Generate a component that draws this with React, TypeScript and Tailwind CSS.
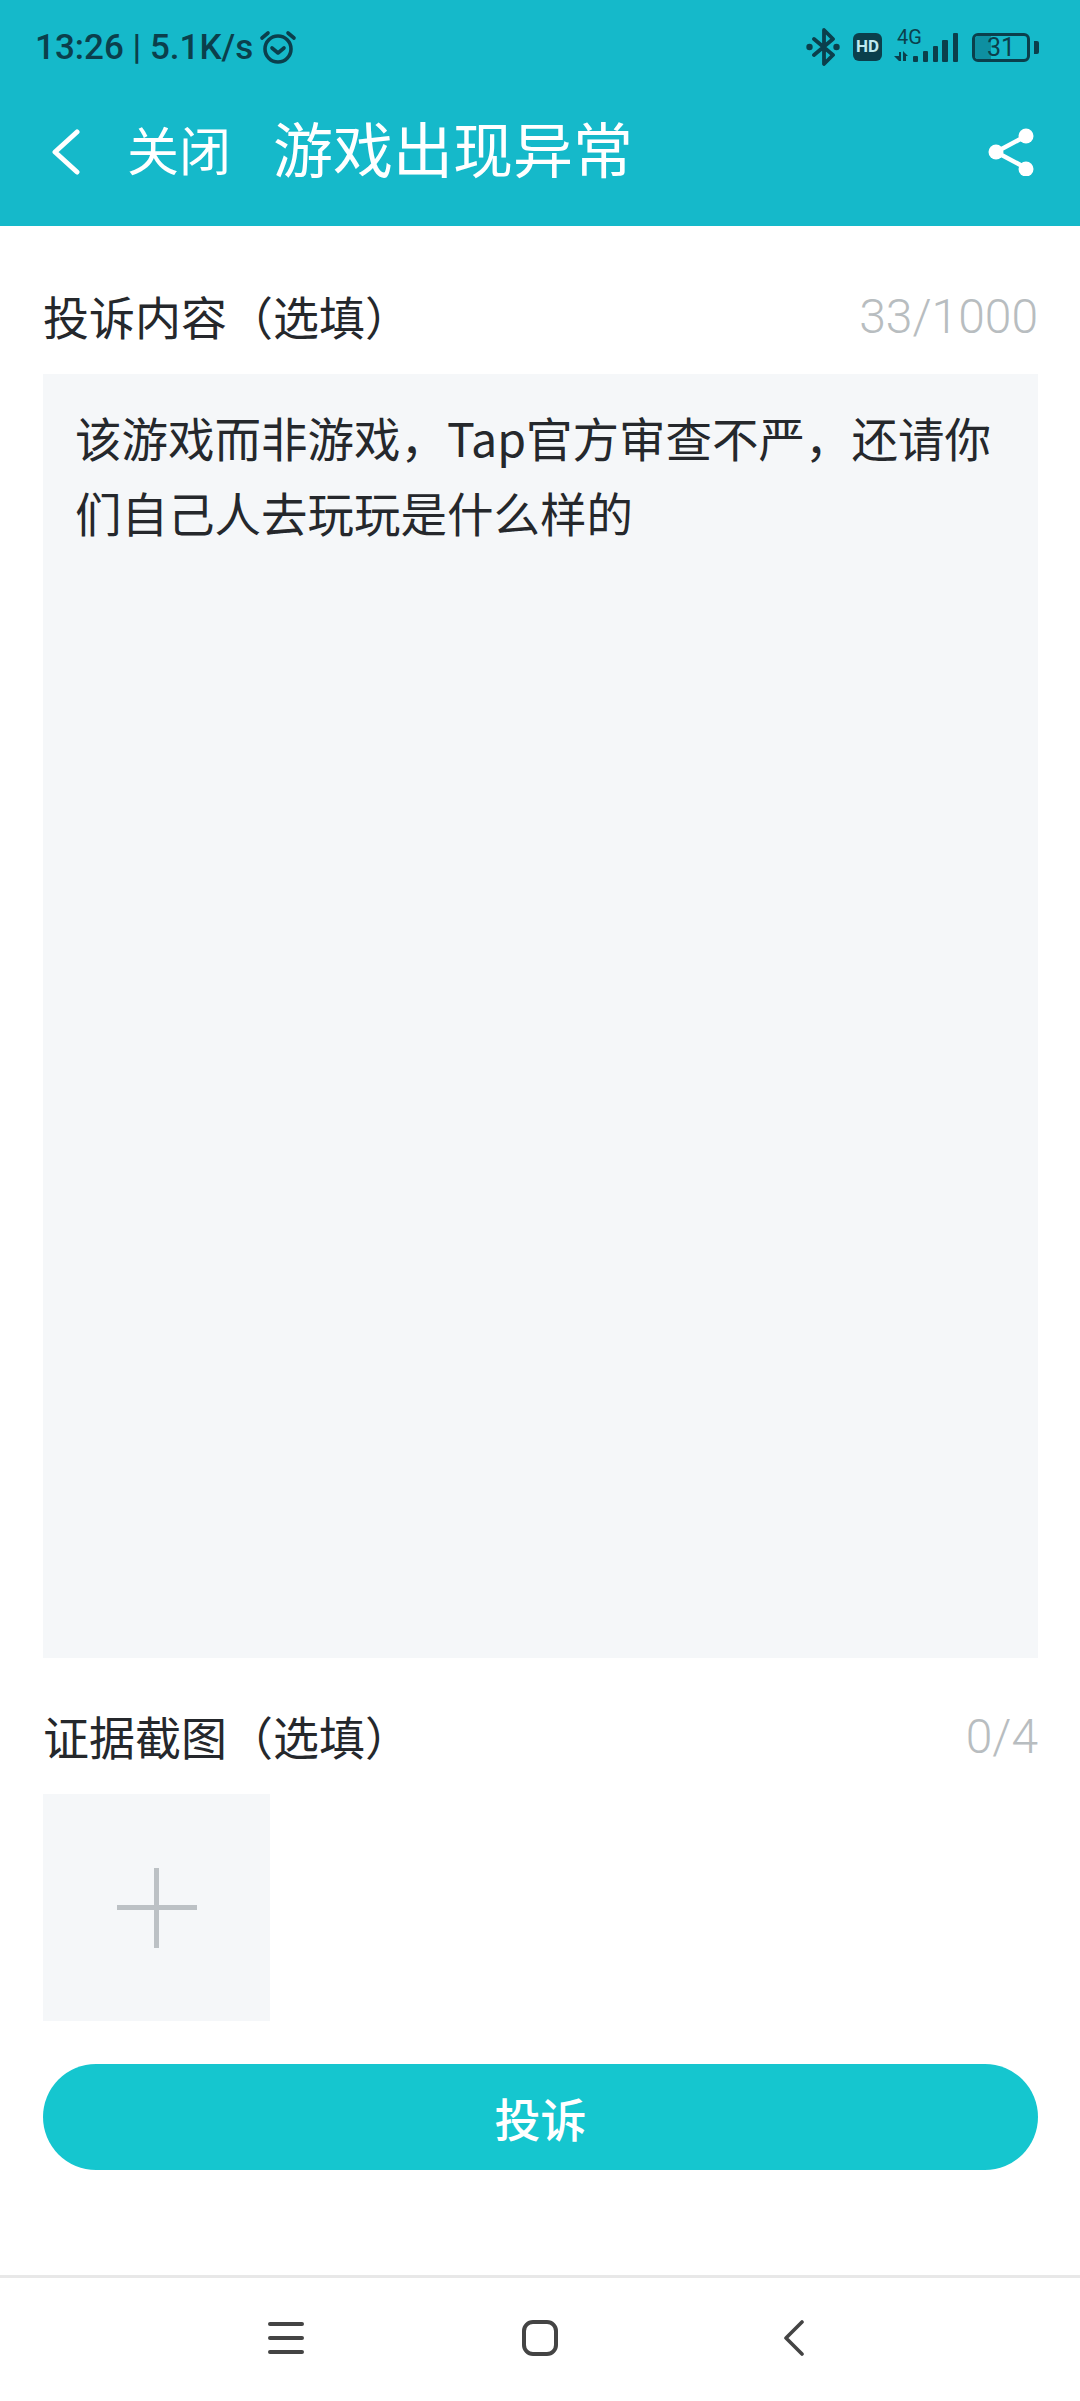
function AlarmIcon() {
  return (
    <svg width="38" height="36" viewBox="0 0 38 36" fill="none" stroke="#0b3f4c" strokeWidth="3.6" strokeLinecap="round" strokeLinejoin="round">
      <circle cx="19" cy="20" r="13" />
      <path d="M13 19l6 5 6-5" />
      <path d="M3 9l6-5" />
      <path d="M35 9l-6-5" />
    </svg>
  )
}

function StatusIcons() {
  return (
    <div className="flex items-center">
      <svg width="34" height="38" viewBox="0 0 34 38" fill="none" className="mr-[13px]">
        <path d="M8 11l19 16-9 9V2l9 9L8 27" stroke="#0b3f4c" strokeWidth="3.8" strokeLinecap="round" strokeLinejoin="round" />
        <circle cx="3.5" cy="19" r="3.2" fill="#0b3f4c" />
        <circle cx="30.5" cy="19" r="3.2" fill="#0b3f4c" />
      </svg>
      <div className="w-[29px] h-[28px] rounded-[6px] bg-[#0b3f4c] text-[#bfeaf0] text-[17px] font-bold flex items-center justify-center font-['Roboto',sans-serif] mr-[12px]">
        HD
      </div>
      <svg width="64" height="40" viewBox="0 -4 64 40" className="mr-[14px] mb-[4px]">
        <text x="3" y="15" fontSize="20" fontFamily="Roboto, sans-serif" fill="#0b3f4c">4G</text>
        <g fill="#0b3f4c">
          <path d="M5 23h2v9H5l-5-5h5z" />
          <path d="M9 22l5 5h-2v5H9z" />
          <rect x="19" y="27" width="5" height="6" rx="1" />
          <rect x="29" y="22" width="5" height="11" rx="1" />
          <rect x="39" y="17" width="5" height="16" rx="1" />
          <rect x="48" y="11" width="6" height="22" rx="1" />
          <rect x="59" y="4" width="5" height="29" rx="1" />
        </g>
      </svg>
      <div className="w-[58px] h-[29px] rounded-[6px] border-[3px] border-[#0b3f4c] relative overflow-hidden flex items-center justify-center">
        <div className="absolute left-0 top-0 bottom-0 w-[16px] bg-[#0e8fa1]" />
        <span className="relative text-[25px] leading-none text-[#0b3f4c] font-['Roboto',sans-serif]">31</span>
      </div>
      <div className="w-[5px] h-[13px] rounded-r-[2px] bg-[#0b3f4c] ml-[4px]" />
    </div>
  )
}

function ShareIcon() {
  return (
    <svg width="46" height="48" viewBox="0 0 46 48" fill="none">
      <path d="M38 8L8 24l30 16" stroke="#fff" strokeWidth="4.5" />
      <circle cx="38" cy="8" r="7.5" fill="#fff" />
      <circle cx="8" cy="24" r="7.5" fill="#fff" />
      <circle cx="38" cy="41" r="7.5" fill="#fff" />
    </svg>
  )
}

function SectionHead({ title, count }: { title: string; count: string }) {
  return (
    <div className="flex items-center justify-between h-[64px]">
      <span className="text-[46px] leading-none text-[#25282c] mb-[3px]">{title}</span>
      <span className="text-[48px] leading-none font-light text-[#b8bdc0] font-['Roboto',sans-serif] mt-[2px]">{count}</span>
    </div>
  )
}

export default function App() {
  return (
    <div className="w-[1080px] h-[2401px] bg-white flex flex-col font-['Noto_Sans_CJK_SC','Noto_Sans',sans-serif]">
      <header className="bg-[#15b9ca] h-[226px] shrink-0 flex flex-col">
        <div className="h-[94px] pl-[35px] pr-[41px] flex items-center justify-between">
          <div className="flex items-center gap-[6px] text-[35px] leading-none font-medium text-[#0b3f4c] font-['Roboto',sans-serif]">
            <span>13:26 | 5.1K/s</span>
            <AlarmIcon />
          </div>
          <StatusIcons />
        </div>
        <div className="flex-1 flex items-center pl-[52px] pr-[46px] pb-[20px] text-white">
          <svg width="28" height="46" viewBox="0 0 28 46" fill="none" stroke="#fff" strokeWidth="5" strokeLinecap="round" strokeLinejoin="round" className="mt-[3px]">
            <path d="M25 3L3 23l22 20" />
          </svg>
          <span className="text-[52px] leading-none ml-[47px] mb-[3px]">关闭</span>
          <span className="text-[60px] leading-none ml-[42px] mb-[6px]">游戏出现异常</span>
          <div className="ml-auto mt-[3px]">
            <ShareIcon />
          </div>
        </div>
      </header>

      <main className="flex-1 pl-[43px] pr-[42px] pt-[58px] flex flex-col">
        <SectionHead title="投诉内容（选填）" count="33/1000" />
        <div className="mt-[26px] h-[1284px] bg-[#f5f7f9] px-[32px] py-[25px] text-[46.5px] leading-[75px] text-[#25282c]">
          该游戏而非游戏，Tap官方审查不严，还请你们自己人去玩玩是什么样的
        </div>

        <div className="mt-[46px]">
          <SectionHead title="证据截图（选填）" count="0/4" />
        </div>
        <div className="mt-[26px] w-[227px] h-[227px] bg-[#f5f7f9] flex items-center justify-center relative">
          <div className="w-[80px] h-[5px] bg-[#bcc1c5]" />
          <div className="absolute w-[5px] h-[80px] bg-[#bcc1c5]" />
        </div>

        <button className="mt-[43px] h-[106px] rounded-full bg-[#15c6cf] text-white text-[46px] font-medium flex items-center justify-center">
          投诉
        </button>
      </main>

      <nav className="h-[126px] shrink-0 border-t-[3px] border-[#e8e8e8] flex items-center justify-center">
        <div className="flex items-center pb-[3px]">
          <div className="w-[254px] flex justify-center">
            <svg width="36" height="32" viewBox="0 0 36 32" fill="none" stroke="#444" strokeWidth="4" strokeLinecap="round">
              <path d="M2 2h32M2 16h32M2 30h32" />
            </svg>
          </div>
          <div className="w-[254px] flex justify-center">
            <svg width="36" height="36" viewBox="0 0 36 36" fill="none" stroke="#444" strokeWidth="4">
              <rect x="2" y="2" width="32" height="32" rx="9" />
            </svg>
          </div>
          <div className="w-[254px] flex justify-center">
            <svg width="20" height="36" viewBox="0 0 20 36" fill="none" stroke="#444" strokeWidth="3.6" strokeLinecap="round" strokeLinejoin="round">
              <path d="M18 2L2 18l16 16" />
            </svg>
          </div>
        </div>
      </nav>
    </div>
  )
}
